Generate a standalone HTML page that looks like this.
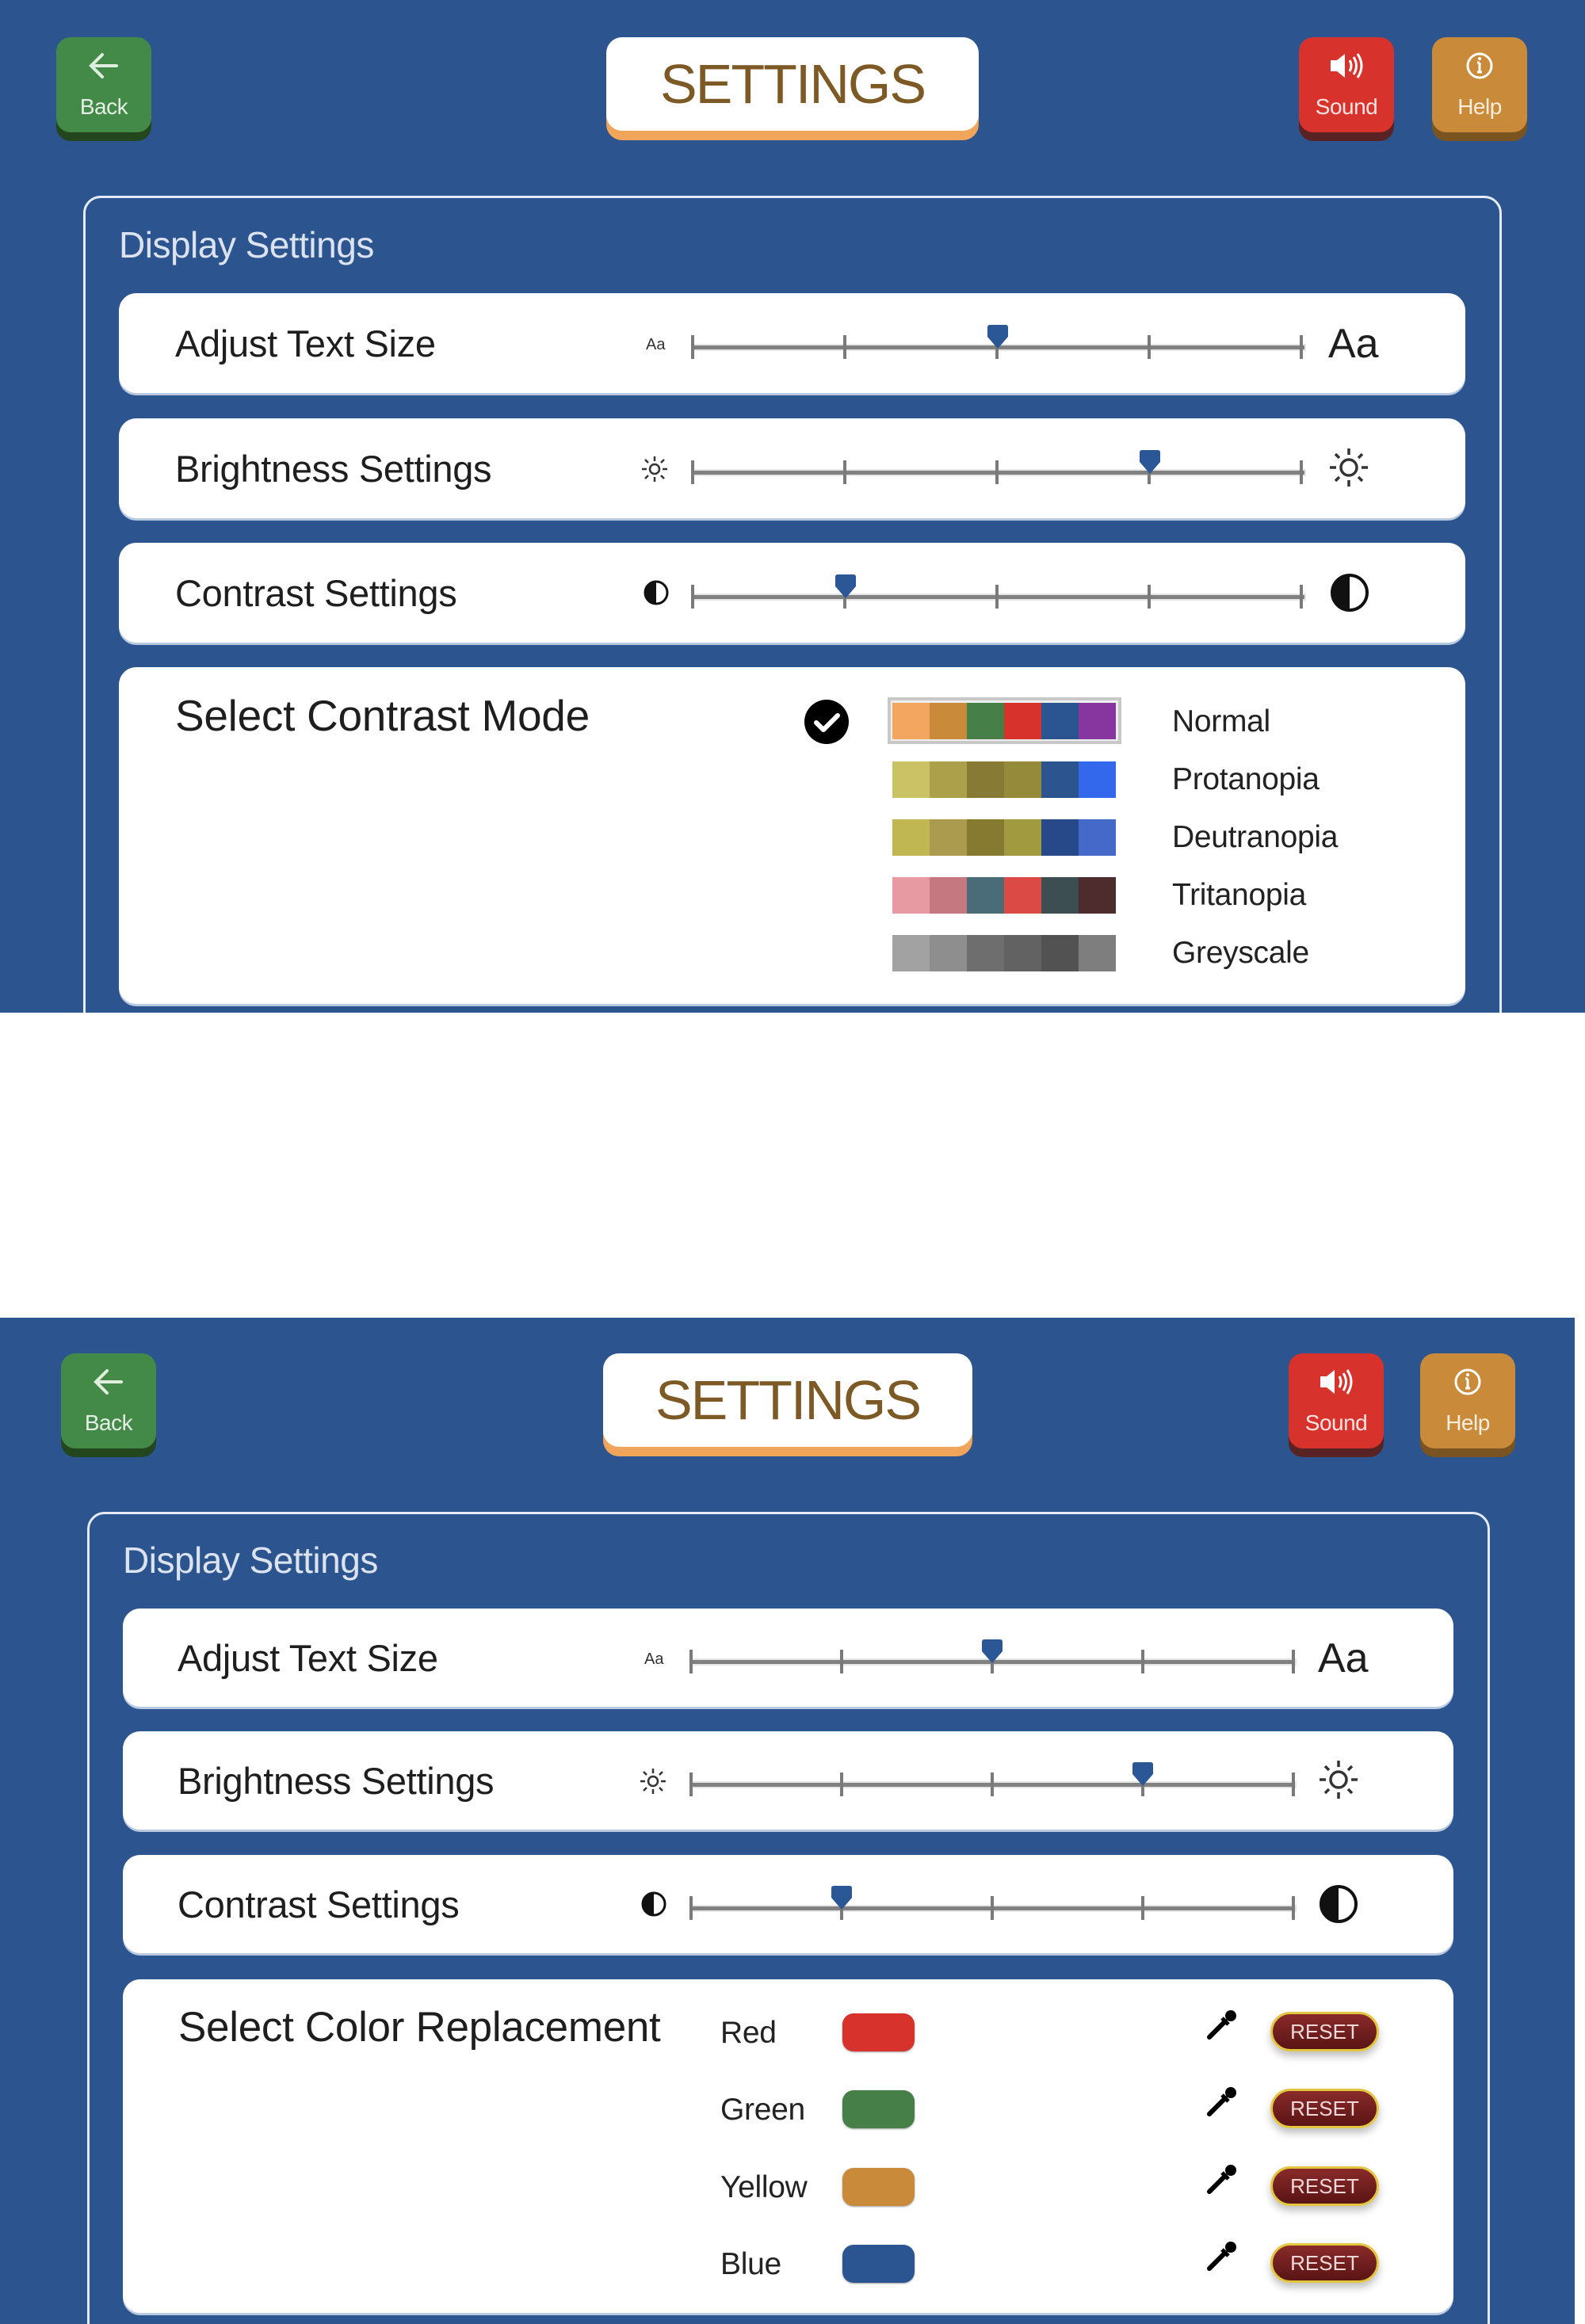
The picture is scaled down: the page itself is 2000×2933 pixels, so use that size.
<!DOCTYPE html>
<html><head><meta charset="utf-8"><style>
*{margin:0;padding:0;box-sizing:border-box}
body{width:2000px;height:2933px;background:#fff;position:relative;overflow:hidden;font-family:"Liberation Sans",sans-serif}
.panel{position:absolute;background:#2c5590;overflow:hidden}
.a{position:absolute}
.btn{position:absolute;width:120px;height:120px;border-radius:18px;color:#e6efe6;font-size:28px;text-align:center}
.btn span{position:absolute;left:0;right:0;top:72px;letter-spacing:-0.5px}
.btn svg{position:absolute;left:36px;top:14px}
.title{position:absolute;background:#fff;border-radius:20px;box-shadow:0 12px 0 #f0a55a;color:#7d5a25;font-size:70px;letter-spacing:-2px;text-align:center;line-height:118px;height:118px}
.box{position:absolute;border:3px solid #e4ebf6;border-radius:22px}
.ds{position:absolute;color:#dce3ee;font-size:46px;letter-spacing:-0.5px}
.row{position:absolute;background:#fff;border-radius:22px;box-shadow:0 3px 0 #b9c9e0}
.lbl{position:absolute;font-size:47px;color:#1e1e1e;letter-spacing:-0.3px}
.line{position:absolute;height:5px;background:#808080;box-shadow:0 0 0 2px #e6e6e6}
.tick{position:absolute;width:4px;height:30px;background:#7a7a7a}
.sw{position:absolute;height:46px;display:flex}
.sw div{width:47px;height:46px}
.ml{position:absolute;font-size:39px;color:#222;letter-spacing:-0.3px}
.pill{position:absolute;width:91px;height:48px;border-radius:14px;box-shadow:0 1px 2px rgba(0,0,0,.4)}
.reset{position:absolute;width:137px;height:50px;border-radius:25px;background:linear-gradient(#8a2a2a,#5a1414);border:3px solid #e2c640;color:#f0d8d8;font-size:26px;text-align:center;line-height:44px;box-shadow:0 6px 10px rgba(0,0,0,.25)}
</style></head><body>

<div class="panel" style="left:0;top:0;width:2000px;height:1278px">
  <div class="btn" style="left:71px;top:47px;background:#438a49;box-shadow:0 11px 0 #24461f"><svg width="48" height="48" viewBox="0 0 48 48"><path d="M40 22H10M22 8L8 22l14 14" stroke="#dfeedd" stroke-width="4" fill="none" stroke-linecap="round"/></svg><span>Back</span></div>
  <div class="title" style="left:765px;top:47px;width:470px">SETTINGS</div>
  <div class="btn" style="left:1639px;top:47px;background:#d8322c;box-shadow:0 11px 0 #5a2323;color:#fbe4e4"><svg width="50" height="44" viewBox="0 0 50 44"><path d="M4 15h8l10-8v30l-10-8H4z" fill="#fff"/><path d="M28 15q4 7 0 14M33 11q7 11 0 22M38 7q10 15 0 30" stroke="#fff" stroke-width="3" fill="none"/></svg><span>Sound</span></div>
  <div class="btn" style="left:1807px;top:47px;background:#c98a3a;box-shadow:0 11px 0 #7a5420;color:#fbeedd"><svg width="48" height="48" viewBox="0 0 48 48"><circle cx="24" cy="22" r="15" stroke="#fff" stroke-width="3" fill="none"/><path d="M24 18v12M21 30h6M21 18h3" stroke="#fff" stroke-width="3"/><circle cx="24" cy="13" r="2" fill="#fff"/></svg><span>Help</span></div>

  <div class="box" style="left:105px;top:247px;width:1790px;height:1100px"></div>
  <div class="ds" style="left:150px;top:282px">Display Settings</div>

  <div class="row" style="left:150px;top:370px;width:1699px;height:126px"></div>
  <div class="lbl" style="left:221px;top:406px">Adjust Text Size</div>
  <div class="a" style="left:815px;top:424px;font-size:20px;color:#333">Aa</div>
  <div class="line" style="left:874px;top:436px;width:772px"></div>
  <div class="tick" style="left:872px;top:423px"></div><div class="tick" style="left:1064px;top:423px"></div><div class="tick" style="left:1256px;top:423px"></div><div class="tick" style="left:1448px;top:423px"></div><div class="tick" style="left:1640px;top:423px"></div>
  <svg class="a" style="left:1246px;top:410px" width="26" height="30" viewBox="0 0 26 30"><path d="M3 0h20q3 0 3 3v12l-13 15L0 15V3q0-3 3-3z" fill="#2b5797"/></svg>
  <div class="a" style="left:1676px;top:404px;font-size:52px;color:#1e1e1e">Aa</div>

  <div class="row" style="left:150px;top:528px;width:1699px;height:126px"></div>
  <div class="lbl" style="left:221px;top:564px">Brightness Settings</div>
  <svg class="a" style="left:808px;top:574px" width="36" height="36" viewBox="0 0 36 36"><circle cx="18" cy="18" r="6" stroke="#333" stroke-width="2.5" fill="none"/><path d="M18 2v6M18 28v6M2 18h6M28 18h6M6 6l4 4M26 26l4 4M6 30l4-4M26 10l4-4" stroke="#333" stroke-width="2.5"/></svg>
  <div class="line" style="left:874px;top:594px;width:772px"></div>
  <div class="tick" style="left:872px;top:581px"></div><div class="tick" style="left:1064px;top:581px"></div><div class="tick" style="left:1256px;top:581px"></div><div class="tick" style="left:1448px;top:581px"></div><div class="tick" style="left:1640px;top:581px"></div>
  <svg class="a" style="left:1438px;top:568px" width="26" height="30" viewBox="0 0 26 30"><path d="M3 0h20q3 0 3 3v12l-13 15L0 15V3q0-3 3-3z" fill="#2b5797"/></svg>
  <svg class="a" style="left:1677px;top:565px" width="50" height="50" viewBox="0 0 50 50"><circle cx="25" cy="25" r="10" stroke="#333" stroke-width="3.5" fill="none"/><path d="M25 1v8M25 41v8M1 25h8M41 25h8M8 8l5 5M37 37l5 5M8 42l5-5M37 13l5-5" stroke="#333" stroke-width="3.5"/></svg>

  <div class="row" style="left:150px;top:685px;width:1699px;height:126px"></div>
  <div class="lbl" style="left:221px;top:721px">Contrast Settings</div>
  <svg class="a" style="left:811px;top:731px" width="34" height="34" viewBox="0 0 34 34"><circle cx="17" cy="17" r="14" stroke="#111" stroke-width="3" fill="#fff"/><path d="M17 3a14 14 0 0 0 0 28z" fill="#111"/></svg>
  <div class="line" style="left:874px;top:751px;width:772px"></div>
  <div class="tick" style="left:872px;top:738px"></div><div class="tick" style="left:1064px;top:738px"></div><div class="tick" style="left:1256px;top:738px"></div><div class="tick" style="left:1448px;top:738px"></div><div class="tick" style="left:1640px;top:738px"></div>
  <svg class="a" style="left:1054px;top:725px" width="26" height="30" viewBox="0 0 26 30"><path d="M3 0h20q3 0 3 3v12l-13 15L0 15V3q0-3 3-3z" fill="#2b5797"/></svg>
  <svg class="a" style="left:1677px;top:722px" width="52" height="52" viewBox="0 0 52 52"><circle cx="26" cy="26" r="22" stroke="#111" stroke-width="4" fill="#fff"/><path d="M26 4a22 22 0 0 0 0 44z" fill="#111"/></svg>

  <div class="row" style="left:150px;top:842px;width:1699px;height:425px"></div>
  <div class="lbl" style="left:221px;top:871px;font-size:55px">Select Contrast Mode</div>
  <svg class="a" style="left:1014px;top:882px" width="58" height="58" viewBox="0 0 58 58"><circle cx="29" cy="29" r="28" fill="#000"/><path d="M16 30l9 9 18-18" stroke="#fff" stroke-width="6" fill="none" stroke-linecap="round" stroke-linejoin="round"/></svg>
  <div class="a" style="left:1120px;top:880px;width:295px;height:59px;border:4px solid #c8c8c8;background:#eee"></div>
  <div class="sw" style="left:1126px;top:887px"><div style="background:#f2a660"></div><div style="background:#c98a3a"></div><div style="background:#468048"></div><div style="background:#d8322c"></div><div style="background:#2b5590"></div><div style="background:#8736a0"></div></div>
  <div class="sw" style="left:1126px;top:961px"><div style="background:#cac264"></div><div style="background:#aca04a"></div><div style="background:#867a34"></div><div style="background:#958a3a"></div><div style="background:#2c5590"></div><div style="background:#3468ec"></div></div>
  <div class="sw" style="left:1126px;top:1034px"><div style="background:#c0b652"></div><div style="background:#ab9b4e"></div><div style="background:#857a30"></div><div style="background:#a19a3e"></div><div style="background:#27498a"></div><div style="background:#4469c8"></div></div>
  <div class="sw" style="left:1126px;top:1107px"><div style="background:#e89aa2"></div><div style="background:#c67880"></div><div style="background:#4a6c78"></div><div style="background:#dc4a46"></div><div style="background:#3c4e52"></div><div style="background:#4e2c2e"></div></div>
  <div class="sw" style="left:1126px;top:1180px"><div style="background:#a2a2a2"></div><div style="background:#8e8e8e"></div><div style="background:#6e6e6e"></div><div style="background:#626262"></div><div style="background:#525252"></div><div style="background:#7e7e7e"></div></div>
  <div class="ml" style="left:1479px;top:889px">Normal</div>
  <div class="ml" style="left:1479px;top:962px">Protanopia</div>
  <div class="ml" style="left:1479px;top:1035px">Deutranopia</div>
  <div class="ml" style="left:1479px;top:1108px">Tritanopia</div>
  <div class="ml" style="left:1479px;top:1181px">Greyscale</div>
</div>

<div class="panel" style="left:0;top:1663px;width:1987px;height:1270px">
  <div class="btn" style="left:77px;top:45px;background:#438a49;box-shadow:0 11px 0 #24461f"><svg width="48" height="48" viewBox="0 0 48 48"><path d="M40 22H10M22 8L8 22l14 14" stroke="#dfeedd" stroke-width="4" fill="none" stroke-linecap="round"/></svg><span>Back</span></div>
  <div class="title" style="left:761px;top:45px;width:466px">SETTINGS</div>
  <div class="btn" style="left:1626px;top:45px;background:#d8322c;box-shadow:0 11px 0 #5a2323;color:#fbe4e4"><svg width="50" height="44" viewBox="0 0 50 44"><path d="M4 15h8l10-8v30l-10-8H4z" fill="#fff"/><path d="M28 15q4 7 0 14M33 11q7 11 0 22M38 7q10 15 0 30" stroke="#fff" stroke-width="3" fill="none"/></svg><span>Sound</span></div>
  <div class="btn" style="left:1792px;top:45px;background:#c98a3a;box-shadow:0 11px 0 #7a5420;color:#fbeedd"><svg width="48" height="48" viewBox="0 0 48 48"><circle cx="24" cy="22" r="15" stroke="#fff" stroke-width="3" fill="none"/><path d="M24 18v12M21 30h6M21 18h3" stroke="#fff" stroke-width="3"/><circle cx="24" cy="13" r="2" fill="#fff"/></svg><span>Help</span></div>

  <div class="box" style="left:110px;top:245px;width:1770px;height:1100px"></div>
  <div class="ds" style="left:155px;top:279px">Display Settings</div>

  <div class="row" style="left:155px;top:367px;width:1679px;height:124px"></div>
  <div class="lbl" style="left:224px;top:402px">Adjust Text Size</div>
  <div class="a" style="left:813px;top:420px;font-size:20px;color:#333">Aa</div>
  <div class="line" style="left:872px;top:432px;width:762px"></div>
  <div class="tick" style="left:870px;top:419px"></div><div class="tick" style="left:1060px;top:419px"></div><div class="tick" style="left:1250px;top:419px"></div><div class="tick" style="left:1440px;top:419px"></div><div class="tick" style="left:1630px;top:419px"></div>
  <svg class="a" style="left:1239px;top:406px" width="26" height="30" viewBox="0 0 26 30"><path d="M3 0h20q3 0 3 3v12l-13 15L0 15V3q0-3 3-3z" fill="#2b5797"/></svg>
  <div class="a" style="left:1663px;top:400px;font-size:52px;color:#1e1e1e">Aa</div>

  <div class="row" style="left:155px;top:522px;width:1679px;height:124px"></div>
  <div class="lbl" style="left:224px;top:557px">Brightness Settings</div>
  <svg class="a" style="left:806px;top:567px" width="36" height="36" viewBox="0 0 36 36"><circle cx="18" cy="18" r="6" stroke="#333" stroke-width="2.5" fill="none"/><path d="M18 2v6M18 28v6M2 18h6M28 18h6M6 6l4 4M26 26l4 4M6 30l4-4M26 10l4-4" stroke="#333" stroke-width="2.5"/></svg>
  <div class="line" style="left:872px;top:587px;width:762px"></div>
  <div class="tick" style="left:870px;top:574px"></div><div class="tick" style="left:1060px;top:574px"></div><div class="tick" style="left:1250px;top:574px"></div><div class="tick" style="left:1440px;top:574px"></div><div class="tick" style="left:1630px;top:574px"></div>
  <svg class="a" style="left:1429px;top:561px" width="26" height="30" viewBox="0 0 26 30"><path d="M3 0h20q3 0 3 3v12l-13 15L0 15V3q0-3 3-3z" fill="#2b5797"/></svg>
  <svg class="a" style="left:1664px;top:558px" width="50" height="50" viewBox="0 0 50 50"><circle cx="25" cy="25" r="10" stroke="#333" stroke-width="3.5" fill="none"/><path d="M25 1v8M25 41v8M1 25h8M41 25h8M8 8l5 5M37 37l5 5M8 42l5-5M37 13l5-5" stroke="#333" stroke-width="3.5"/></svg>

  <div class="row" style="left:155px;top:678px;width:1679px;height:124px"></div>
  <div class="lbl" style="left:224px;top:713px">Contrast Settings</div>
  <svg class="a" style="left:808px;top:723px" width="34" height="34" viewBox="0 0 34 34"><circle cx="17" cy="17" r="14" stroke="#111" stroke-width="3" fill="#fff"/><path d="M17 3a14 14 0 0 0 0 28z" fill="#111"/></svg>
  <div class="line" style="left:872px;top:743px;width:762px"></div>
  <div class="tick" style="left:870px;top:730px"></div><div class="tick" style="left:1060px;top:730px"></div><div class="tick" style="left:1250px;top:730px"></div><div class="tick" style="left:1440px;top:730px"></div><div class="tick" style="left:1630px;top:730px"></div>
  <svg class="a" style="left:1049px;top:717px" width="26" height="30" viewBox="0 0 26 30"><path d="M3 0h20q3 0 3 3v12l-13 15L0 15V3q0-3 3-3z" fill="#2b5797"/></svg>
  <svg class="a" style="left:1663px;top:714px" width="52" height="52" viewBox="0 0 52 52"><circle cx="26" cy="26" r="22" stroke="#111" stroke-width="4" fill="#fff"/><path d="M26 4a22 22 0 0 0 0 44z" fill="#111"/></svg>

  <div class="row" style="left:155px;top:835px;width:1679px;height:421px"></div>
  <div class="lbl" style="left:225px;top:865px;font-size:53px">Select Color Replacement</div>

  <div class="ml" style="left:909px;top:881px">Red</div>
  <div class="pill" style="left:1063px;top:878px;background:#d8322c"></div>
  <div class="ml" style="left:909px;top:978px">Green</div>
  <div class="pill" style="left:1063px;top:975px;background:#468048"></div>
  <div class="ml" style="left:909px;top:1076px">Yellow</div>
  <div class="pill" style="left:1063px;top:1073px;background:#c98a3a"></div>
  <div class="ml" style="left:909px;top:1173px">Blue</div>
  <div class="pill" style="left:1063px;top:1170px;background:#2b5590"></div>

  <svg class="a" style="left:1520px;top:870px" width="44" height="44" viewBox="0 0 44 44"><path d="M6 38L26 18" stroke="#000" stroke-width="6" stroke-linecap="round"/><path d="M22 14l8 8" stroke="#000" stroke-width="5"/><circle cx="33" cy="11" r="7" fill="#000"/></svg>
  <svg class="a" style="left:1520px;top:967px" width="44" height="44" viewBox="0 0 44 44"><path d="M6 38L26 18" stroke="#000" stroke-width="6" stroke-linecap="round"/><path d="M22 14l8 8" stroke="#000" stroke-width="5"/><circle cx="33" cy="11" r="7" fill="#000"/></svg>
  <svg class="a" style="left:1520px;top:1065px" width="44" height="44" viewBox="0 0 44 44"><path d="M6 38L26 18" stroke="#000" stroke-width="6" stroke-linecap="round"/><path d="M22 14l8 8" stroke="#000" stroke-width="5"/><circle cx="33" cy="11" r="7" fill="#000"/></svg>
  <svg class="a" style="left:1520px;top:1162px" width="44" height="44" viewBox="0 0 44 44"><path d="M6 38L26 18" stroke="#000" stroke-width="6" stroke-linecap="round"/><path d="M22 14l8 8" stroke="#000" stroke-width="5"/><circle cx="33" cy="11" r="7" fill="#000"/></svg>

  <div class="reset" style="left:1603px;top:876px">RESET</div>
  <div class="reset" style="left:1603px;top:973px">RESET</div>
  <div class="reset" style="left:1603px;top:1071px">RESET</div>
  <div class="reset" style="left:1603px;top:1168px">RESET</div>
</div>
</body></html>
